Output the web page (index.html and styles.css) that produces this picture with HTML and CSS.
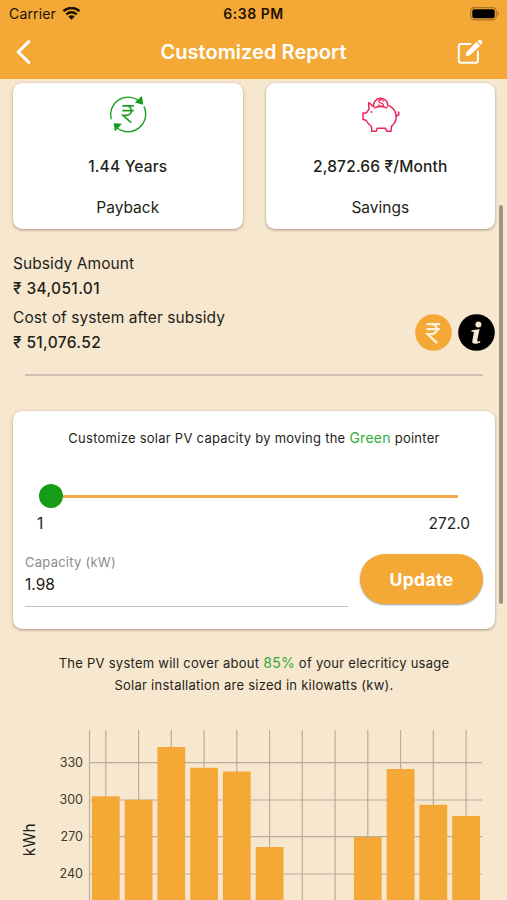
FILE: index.html
```html
<!DOCTYPE html>
<html lang="en">
	<head>
		<meta charset="UTF-8">
		<title>Customized Report</title>
		<link rel="stylesheet" href="styles.css">
	</head>
	<body>
		<header class="header">
			<div class="status">
				<div class="carrier">
					<span>Carrier</span>
					<svg width="19" height="14" viewBox="0 0 19 14">
						<path d="M1.4 4.2C6-.1 13-.1 17.6 4.2M4.3 7.3c3-2.8 7.4-2.8 10.4 0" fill="none" stroke="#1c1204" stroke-width="2.5"/>
						<path d="M6.3 9.6c1.9-1.7 4.5-1.7 6.4 0L9.5 12.8z" fill="#1c1204"/>
					</svg>
				</div>
				<span class="time">6:38 PM</span>
				<svg class="battery" width="30" height="14" viewBox="0 0 30 14">
					<rect x=".7" y=".7" width="25.6" height="12.2" rx="3.6" fill="none" stroke="#a87426" stroke-width="1.2"/>
					<rect x="2.3" y="2.3" width="22.4" height="9" rx="2" fill="#000"/>
					<path d="M27.6 4.8c2 .8 2 3.2 0 4z" fill="#a87426"/>
				</svg>
			</div>
			<div class="nav">
				<svg width="18" height="26" viewBox="0 0 18 26">
					<path d="M14.8 2.6 4.2 13l10.6 10.4" fill="none" stroke="#fff" stroke-width="3" stroke-linecap="round" stroke-linejoin="round"/>
				</svg>
				<h1 class="title">Customized Report</h1>
				<svg class="edit" width="28" height="28" viewBox="0 0 28 28">
					<path d="M14.4 6.1H4.8a2 2 0 0 0-2 2v14.7a2 2 0 0 0 2 2h15.1a2 2 0 0 0 2-2v-9.3" fill="none" stroke="#fff" stroke-width="2" stroke-linecap="round"/>
					<path d="M20.3 4.5 23.7 7.8 13.8 16.8 10.2 17.8 11 14.1z" fill="#fff" stroke="#fff" stroke-linejoin="round"/>
					<path d="M21.5 3.4l1.1-1c1.8-1.4 4.8 1.2 3.4 3.2l-1.1 1.1z" fill="#fff"/>
				</svg>
			</div>
		</header>

		<main class="content">
			<div class="cards">
				<section class="card">
					<svg width="40" height="40" viewBox="0 0 40 40">
						<g fill="none" stroke="#22a127" stroke-width="1.4">
							<path d="M3.2 25.4A17.6 17.6 0 0 1 30.5 6.5"/>
							<path d="M35.9 12.4A17.6 17.6 0 0 1 8.9 33.7"/>
							<path d="M14.3 11.8h11.5M14.3 16.6h11.5M15 11.8h3.2c6.9 0 6.9 9.6 0 9.6H15l8.2 7.3" stroke-width="1.7"/>
						</g>
						<path d="M33.9 2 35.2 10.7 26.9 8.4z" fill="#169b1b"/>
						<path d="M5.7 29.2 13.9 29.7 6.9 37.4z" fill="#169b1b"/>
					</svg>
					<strong class="value">1.44 Years</strong>
					<span class="label">Payback</span>
				</section>
				<section class="card">
					<svg width="40" height="40" viewBox="0 0 40 40">
						<g fill="none" stroke="#ec2458" stroke-width="1.5" stroke-linejoin="round" stroke-linecap="round">
							<path d="M12.5 12.2C11.3 10.2 9.6 9 8.6 8.6L9 15.2c-1.2 1.2-1.9 2.3-2.5 3.9H3v6.1l3.2 1.3c1.4 2.7 3.3 4.6 5.3 6l.3 4.8h4.3l1.1-3h8.4l1.1 3h4.3l.6-5.2c3.1-2.6 4.8-6.1 4.6-10-.4-4.5-2.8-8-6.5-10.3"/>
							<path d="M14.6 13.9c3.5-1.6 7.9-1.8 12.3 0"/>
							<path d="M13.7 12.8A7.2 7.2 0 1 1 27.9 12.2"/>
							<path d="M36 21.8c2.4-.1 3.5-1.5 2.6-3.7"/>
							<path d="M23.3 7.2c-.6-2.2-4.6-1.8-4.6.3s4.6 1.3 4.6 3.4-4.1 2.1-4.8 0" stroke-width="1.3"/>
						</g>
						<circle cx="11.5" cy="18" r=".9" fill="#ec2458"/>
					</svg>
					<strong class="value">2,872.66 ₹/Month</strong>
					<span class="label">Savings</span>
				</section>
			</div>

			<section class="summary">
				<dl class="costs">
					<dt>Subsidy Amount</dt>
					<dd>₹ 34,051.01</dd>
					<dt class="system">Cost of system after subsidy</dt>
					<dd>₹ 51,076.52</dd>
				</dl>
				<div class="actions">
					<svg width="37" height="37" viewBox="0 0 37 37">
						<circle cx="18.5" cy="18.5" r="18.3" fill="#f4a936"/>
						<path d="M11.5 10.2h13.4M11.5 15.2h13.4M12.5 10.2h3.2c8 0 8 9.9 0 9.9h-3.2l9.6 9" fill="none" stroke="#fdf0d8" stroke-width="2.3"/>
					</svg>
					<svg width="37" height="37" viewBox="0 0 37 37">
						<circle cx="18.5" cy="18.5" r="18.3" fill="#000"/>
						<circle cx="20.4" cy="10.4" r="3" fill="#f7e7cf"/>
						<path d="M13.4 16.4c2.7-.3 5-.7 8.2-1.3l-2.4 11.4c-.1 1 .9 1.2 3 .5v1.4c-4.8 2.2-8.6 1.8-7.9-1.4l1.5-8c.3-1.1-.8-1.4-2.4-1.2z" fill="#f7e7cf"/>
					</svg>
				</div>
			</section>
			<hr class="divider">

			<section class="panel">
				<p class="hint">Customize solar PV capacity by moving the <span class="green">Green</span> pointer</p>
				<div class="slider">
					<span class="thumb"></span>
					<span class="track"></span>
				</div>
				<div class="range"><span>1</span><span>272.0</span></div>
				<div class="form">
					<div class="field">
						<span class="field-label">Capacity (kW)</span>
						<span class="field-value">1.98</span>
					</div>
					<button class="update" type="button">Update</button>
				</div>
			</section>

			<p class="note">The PV system will cover about <span class="green">85%</span> of your elecriticy usage<br>Solar installation are sized in kilowatts (kw).</p>
		</main>

		<!-- monthly generation -->
		<svg class="chart" width="507" height="180" viewBox="0 720 507 180">
			<path class="grid" d="M89.5 762.7H482M89.5 800H482M89.5 836.7H482M89.5 874H482M89.5 730V900M105.8 730V900M138.6 730V900M171.3 730V900M204.1 730V900M236.8 730V900M269.6 730V900M302.3 730V900M335.1 730V900M367.8 730V900M400.6 730V900M433.3 730V900M466.1 730V900"/>
			<g fill="#f4a936">
				<rect x="91.9" y="796.3" width="27.8" height="104"/>
				<rect x="124.7" y="799.8" width="27.8" height="101"/>
				<rect x="157.4" y="747" width="27.8" height="153"/>
				<rect x="190.2" y="767.8" width="27.8" height="133"/>
				<rect x="222.9" y="771.5" width="27.8" height="129"/>
				<rect x="255.7" y="847" width="27.8" height="53"/>
				<rect x="353.9" y="837" width="27.8" height="63"/>
				<rect x="386.7" y="769" width="27.8" height="131"/>
				<rect x="419.4" y="804.8" width="27.8" height="96"/>
				<rect x="452.2" y="816" width="27.8" height="84"/>
			</g>
			<g class="ticks">
				<text x="83" y="766.5">330</text>
				<text x="83" y="803.7">300</text>
				<text x="83" y="840.7">270</text>
				<text x="83" y="877.7">240</text>
			</g>
			<text class="unit" transform="translate(35.3 856.3) rotate(-90)">kWh</text>
		</svg>
		<div class="scrollbar"></div>
	</body>
</html>
```

FILE: styles.css
```css
*{
	margin: 0;
	padding: 0;
	box-sizing: border-box;
}
body{
	position: relative;
	width: 507px;
	height: 900px;
	overflow: hidden;
	background-color: #f7e7cf;
	color: #241f19;
	font-family: Inter, "Liberation Sans", sans-serif;
}
svg{
	display: block;
	flex: none;
}
.header{
	height: 79px;
	background-color: #f4a936;
}
.status{
	display: grid;
	grid-template-columns: 1fr auto 1fr;
	align-items: center;
	height: 27px;
	padding: 0 7px 0 9px;
	font-size: 14px;
	color: #1c1204;
}
.carrier{
	display: flex;
	align-items: center;
	gap: 6px;
	letter-spacing: 0.15px;
}
.time{
	margin-left: -2px;
	font-weight: 600;
	letter-spacing: 0.5px;
}
.battery{
	justify-self: end;
}
.nav{
	display: grid;
	grid-template-columns: 1fr auto 1fr;
	align-items: center;
	height: 52px;
	padding: 0 14px 2px;
}
.edit{
	justify-self: end;
	margin-right: 9px;
}
.title{
	font-size: 20px;
	font-weight: 600;
	letter-spacing: 0.05px;
	color: #fff;
}
.content{
	height: 641px;
	padding: 4px 12px 0 13px;
}
.cards{
	display: grid;
	grid-template-columns: 1fr 1fr;
	gap: 23px;
}
.card{
	display: flex;
	flex-direction: column;
	align-items: center;
	height: 146px;
	padding-top: 11px;
}
.card, .panel{
	background-color: #fff;
	border-radius: 9px;
	box-shadow: 0 1px 3px rgba(70, 50, 20, 0.45);
}
.value{
	margin-top: 23px;
	font-size: 15.5px;
	font-weight: 500;
	letter-spacing: 0.18px;
	line-height: 20px;
}
.label{
	margin-top: 21px;
	font-size: 15.5px;
	line-height: 20px;
}
.summary{
	display: flex;
	justify-content: space-between;
	height: 145px;
	padding-top: 22px;
}
.costs{
	font-size: 15.5px;
	letter-spacing: 0.08px;
	line-height: 25px;
}
.costs dd{
	font-weight: 500;
	letter-spacing: 0.35px;
}
.costs .system{
	margin-top: 4px;
}
.actions{
	display: flex;
	gap: 6px;
	padding-top: 63px;
}
.divider{
	height: 2px;
	margin: 0 12px;
	border: 0;
	background-color: #cdc2b3;
}
.panel{
	height: 218px;
	margin-top: 35px;
	padding: 17px 12px 0;
}
.hint, .note{
	font-size: 13px;
	letter-spacing: 0.26px;
	line-height: 20px;
	text-align: center;
}
.green{
	font-size: 14px;
	color: #2fac38;
}
.slider{
	display: flex;
	align-items: center;
	height: 24px;
	margin: 36px 25px 0 14px;
}
.thumb{
	width: 24px;
	height: 24px;
	border-radius: 50%;
	background-color: #179c17;
}
.track{
	flex: 1;
	height: 3px;
	background-color: #f0ac4a;
}
.range{
	display: flex;
	justify-content: space-between;
	margin: 6px 13px 0 12px;
	font-size: 15.5px;
	line-height: 20px;
}
.form{
	display: flex;
	justify-content: space-between;
	margin-top: 20px;
}
.field{
	display: flex;
	flex-direction: column;
	width: 323px;
	height: 53px;
	border-bottom: 1px solid #c0c0c0;
}
.field-label{
	font-size: 13px;
	letter-spacing: 0.25px;
	line-height: 16px;
	color: #8c8c8c;
}
.field-value{
	margin-top: 5px;
	font-size: 15.5px;
	line-height: 20px;
}
.update{
	width: 123px;
	height: 50px;
	border: 0;
	border-radius: 25px;
	background-color: #f4a936;
	box-shadow: 0 1px 2px rgba(0, 0, 0, 0.4);
	font: 700 17.5px Inter, sans-serif;
	letter-spacing: 0.4px;
	color: #fff;
}
.note{
	margin-top: 23px;
	line-height: 22px;
}
.grid{
	fill: none;
	stroke: #b9ad9b;
	stroke-width: 1.2;
}
.ticks{
	font-size: 12.5px;
	fill: #40382e;
	text-anchor: end;
}
.unit{
	font-size: 15.5px;
	fill: #241f19;
}
.scrollbar{
	position: absolute;
	top: 205px;
	right: 4px;
	width: 4px;
	height: 399px;
	border-radius: 2px;
	background-color: #a1947e;
}
```
